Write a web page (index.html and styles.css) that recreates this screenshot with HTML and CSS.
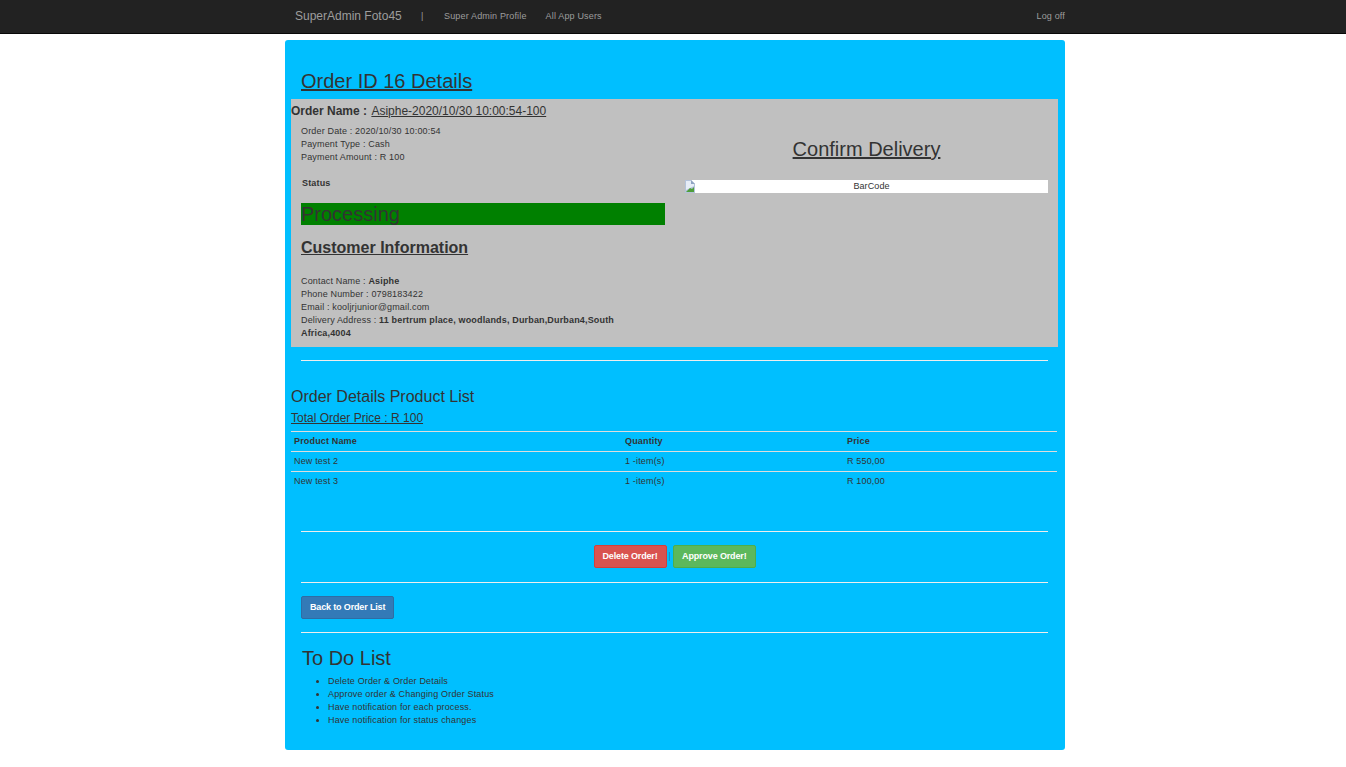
FILE: index.html
```html
<!DOCTYPE html>
<html lang="en">
<head>
    <meta charset="UTF-8">
    <meta name="viewport" content="width=device-width, initial-scale=1.0">
    <title>Order Details</title>
    <link rel="stylesheet" href="styles.css">
</head>
<body>
    <nav class="navbar">
        <div class="navbar-inner">
            <a class="brand" href="#">SuperAdmin Foto45</a>
            <span class="nav-sep">|</span>
            <a class="nav-link nav-profile" href="#">Super Admin Profile</a>
            <a class="nav-link nav-users" href="#">All App Users</a>
            <a class="nav-link nav-logoff" href="#">Log off</a>
        </div>
    </nav>

    <div class="panel">
        <h2 class="page-title"><u>Order ID 16 Details</u></h2>

        <div class="order-box">
            <h4 class="order-name"><b>Order Name :</b> <u>Asiphe-2020/10/30 10:00:54-100</u></h4>
            <div class="order-cols">
                <div class="order-left">
                    <p class="info">Order Date : 2020/10/30 10:00:54<br>Payment Type : Cash<br>Payment Amount : R 100</p>
                    <p class="status-label"><b>Status</b></p>
                    <div class="status-bar">Processing</div>
                    <h3 class="customer-title"><u>Customer Information</u></h3>
                    <p class="info customer">Contact Name : <b>Asiphe</b><br>Phone Number : 0798183422<br>Email : kooljrjunior@gmail.com<br>Delivery Address : <b>11 bertrum place, woodlands, Durban,Durban4,South</b><br><b>Africa,4004</b></p>
                </div>
                <div class="order-right">
                    <h2 class="confirm-title"><u>Confirm Delivery</u></h2>
                    <div class="barcode">
                        <svg class="broken-img" width="10" height="13" viewBox="0 0 10 13">
                            <path d="M0 0h6l4 4v9H0z" fill="#b4c3da"/>
                            <path d="M1 1h5v3h3v2L1 10z" fill="#e6edf7"/>
                            <path d="M1 12l4-4 2 1 2-2v5z" fill="#4f9e3a"/>
                            <path d="M6 0l4 4H6z" fill="#8fa3c2"/>
                        </svg>
                        <span>BarCode</span>
                    </div>
                </div>
            </div>
        </div>

        <hr class="rule rule-first">

        <h4 class="list-title">Order Details Product List</h4>
        <p class="total"><u>Total Order Price : R 100</u></p>

        <table class="products">
            <thead>
                <tr><th class="col-name">Product Name</th><th class="col-qty">Quantity</th><th>Price</th></tr>
            </thead>
            <tbody>
                <tr><td>New test 2</td><td>1 -item(s)</td><td>R 550,00</td></tr>
                <tr><td>New test 3</td><td>1 -item(s)</td><td>R 100,00</td></tr>
            </tbody>
        </table>

        <hr class="rule rule-actions">

        <div class="actions">
            <a class="btn btn-danger" href="#">Delete Order!</a>
            <span class="actions-sep">|</span>
            <a class="btn btn-success" href="#">Approve Order!</a>
        </div>

        <hr class="rule rule-back">

        <div class="back-row">
            <a class="btn btn-primary" href="#">Back to Order List</a>
        </div>

        <hr class="rule rule-todo">

        <h3 class="todo-title">To Do List</h3>
        <ul class="todo">
            <li>Delete Order &amp; Order Details</li>
            <li>Approve order &amp; Changing Order Status</li>
            <li>Have notification for each process.</li>
            <li>Have notification for status changes</li>
        </ul>
    </div>
</body>
</html>
```

FILE: styles.css
```css
* {
    box-sizing: border-box;
}
body {
    margin: 0;
    background: #fff;
    color: #333;
    font-family: "Liberation Sans", Arial, sans-serif;
    font-size: 9px;
    line-height: 13px;
    letter-spacing: 0.16px;
}
a {
    text-decoration: none;
}
p {
    margin: 0;
}

.navbar {
    height: 34px;
    background: #222;
    border-bottom: 1px solid #080808;
}
.navbar-inner {
    width: 780px;
    margin-left: 285px;
    height: 33px;
    display: flex;
    align-items: center;
    padding-left: 10px;
    color: #9d9d9c;
}
.brand {
    width: 107px;
    color: #9d9d9d;
    font-size: 12px;
    letter-spacing: 0;
    white-space: nowrap;
}
.nav-sep {
    width: 2px;
    margin-left: 19px;
    font-size: 9px;
}
.nav-link {
    color: #9d9d9d;
}
.nav-profile {
    margin-left: 21px;
}
.nav-users {
    margin-left: 19px;
}
.nav-logoff {
    margin-left: auto;
}

.panel {
    width: 780px;
    height: 710px;
    margin: 6px 0 0 285px;
    background: #00bfff;
    border-radius: 3px;
    padding: 0 7px 0 6px;
}
.page-title {
    margin: 0;
    padding: 29px 0 0 10px;
    height: 59px;
    font-size: 20px;
    line-height: 24px;
    font-weight: 400;
    letter-spacing: 0;
}

.order-box {
    background: #c0c0c0;
    height: 248px;
}
.order-name {
    margin: 0;
    padding-top: 5px;
    height: 26px;
    font-size: 12px;
    line-height: 14px;
    font-weight: 400;
    letter-spacing: 0;
}
.order-name u {
    margin-left: 1px;
}
.order-cols {
    display: flex;
    padding: 0 10px;
}
.order-left {
    width: 364px;
}
.order-right {
    width: 363px;
    margin-left: 20px;
}
.status-label {
    margin: 13px 0 0 1px;
}
.status-bar {
    margin-top: 13px;
    height: 22px;
    background: #008000;
    font-size: 20px;
    line-height: 22px;
    letter-spacing: 0;
}
.customer-title {
    margin: 14px 0 0;
    height: 33px;
    font-size: 16px;
    line-height: 18px;
    letter-spacing: 0;
}
.customer {
    padding-top: 3px;
    width: 330px;
}
.confirm-title {
    margin: 0;
    padding-top: 12px;
    height: 55px;
    text-align: center;
    font-size: 20px;
    line-height: 24px;
    font-weight: 400;
    letter-spacing: 0;
}
.barcode {
    position: relative;
    height: 13px;
    padding-left: 10px;
    background: #fff;
    text-align: center;
    letter-spacing: 0.1px;
    line-height: 13px;
}
.broken-img {
    position: absolute;
    left: 0;
    top: 0;
}

.rule {
    margin: 0 10px;
    border: 0;
    border-top: 1px solid #eee;
}
.rule-first {
    margin-top: 13px;
}
.list-title {
    margin: 27px 0 0;
    height: 21px;
    font-size: 16px;
    line-height: 18px;
    font-weight: 400;
    letter-spacing: 0;
}
.total {
    height: 22px;
    padding-top: 2px;
    font-size: 12px;
    line-height: 14px;
    letter-spacing: 0;
}
.products {
    width: 766px;
    border-collapse: collapse;
}
.products th,
.products td {
    height: 20px;
    padding: 3px;
    border-top: 1px solid #ddd;
    text-align: left;
    vertical-align: middle;
    line-height: 13px;
}
.col-name {
    width: 331px;
}
.col-qty {
    width: 222px;
}

.rule-actions {
    margin-top: 39px;
}
.actions {
    display: flex;
    justify-content: center;
    align-items: center;
    height: 50px;
    gap: 2px;
}
.actions-sep {
    color: #337ab7;
}
.btn {
    display: inline-block;
    height: 23px;
    padding: 4px 8px;
    border: 1px solid transparent;
    border-radius: 2px;
    color: #fff;
    font-weight: 700;
    line-height: 13px;
    letter-spacing: -0.15px;
}
.btn-danger {
    background: #d9534f;
    border-color: #d43f3a;
}
.btn-success {
    background: #5cb85c;
    border-color: #4cae4c;
}
.btn-primary {
    background: #337ab7;
    border-color: #2e6da4;
}
.back-row {
    height: 49px;
    padding: 13px 0 0 10px;
}
.todo-title {
    margin: 0;
    padding: 13px 0 0 11px;
    height: 42px;
    font-size: 20px;
    line-height: 24px;
    font-weight: 400;
    letter-spacing: 0;
}
.todo {
    margin: 0;
    padding: 0 0 0 37px;
}
```
